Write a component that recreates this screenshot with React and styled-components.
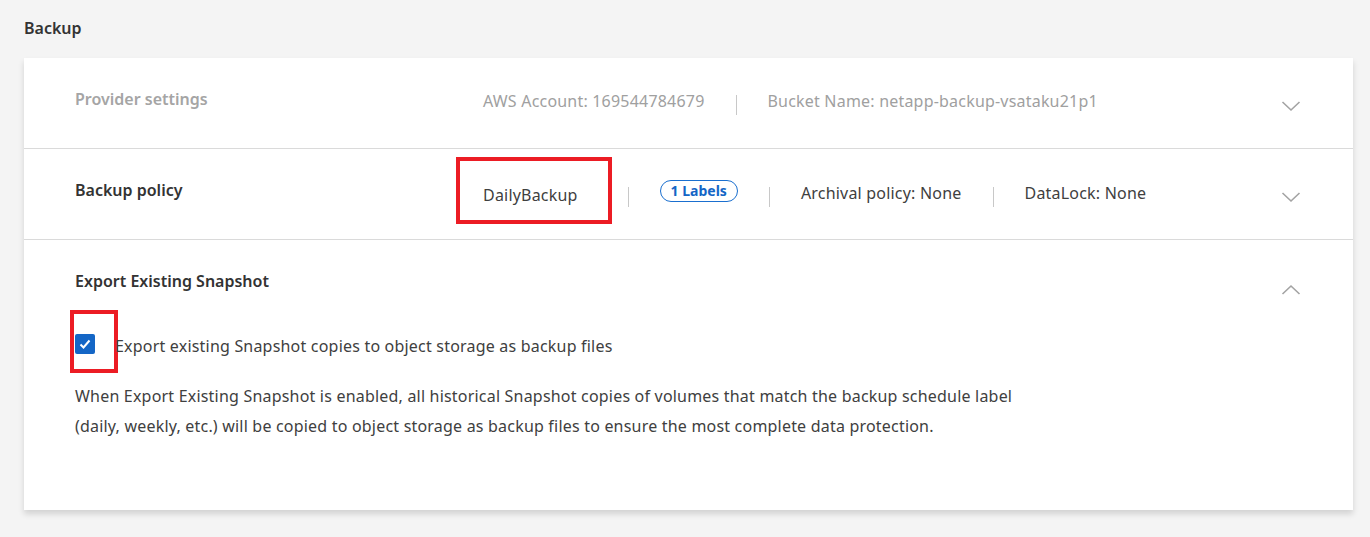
import React from 'react'
import styled, { createGlobalStyle } from 'styled-components'

const Global = createGlobalStyle`
  body {
    margin: 0;
    background: #f4f4f4;
    font-family: "Noto Sans", "Open Sans", sans-serif;
    color: #404040;
    letter-spacing: 0.2px;
  }
`

const Page = styled.div`
  padding: 17px 17px 27px 24px;
`

const PageTitle = styled.h2`
  margin: 0 0 19px 0;
  font-size: 16px;
  line-height: 22px;
  font-weight: 600;
  color: #333;
  letter-spacing: 0;
`

const Card = styled.div`
  background: #fff;
  box-shadow: 0 4px 6px rgba(0, 0, 0, 0.14);
`

const Section = styled.div`
  border-bottom: ${props => props.last ? 'none' : '1px solid #dadada'};
  padding: 30px 52px ${props => props.last ? '69px' : '0'} 51px;
  min-height: ${props => props.last ? 'auto' : '60px'};
`

const Header = styled.div`
  display: flex;
  align-items: flex-start;
`

const Label = styled.div`
  width: 408px;
  flex-shrink: 0;
  font-size: 16px;
  line-height: 22px;
  font-weight: 600;
  letter-spacing: 0;
  color: ${props => props.disabled ? '#a5a5a5' : '#333'};
`

const Summary = styled.div`
  flex: 1;
  display: flex;
  align-items: flex-start;
  gap: 31px;
  padding-top: ${props => props.offset || 2}px;
  font-size: 16px;
  line-height: 22px;
  color: ${props => props.disabled ? '#a0a0a0' : '#404040'};
`

const Sep = styled.span`
  width: 1px;
  height: 20px;
  margin-top: 5px;
  background: #c8c8c8;
`

const Highlight = styled.span`
  display: inline-flex;
  align-items: center;
  border: 4px solid #ec1c24;
  margin: -25px -15px -18px -27px;
  padding: 23px 30px 14px 23px;
`

const Badge = styled.span`
  display: inline-flex;
  align-items: center;
  height: 22px;
  padding: 0 10px;
  margin-top: -2px;
  border: 1.5px solid #1a6fcf;
  border-radius: 12px;
  color: #1466c6;
  font-size: 14px;
  font-weight: 700;
  letter-spacing: 0;
  box-sizing: border-box;
`

const Chevron = styled.svg`
  flex-shrink: 0;
  margin-top: ${props => props.up ? '10px' : '8px'};
  width: 20px;
  height: 20px;
`

const CheckRow = styled.div`
  display: flex;
  align-items: flex-start;
  margin-top: 32px;
  font-size: 16px;
  line-height: 22px;
  color: #404040;
`

const CheckFrame = styled.span`
  display: inline-flex;
  flex-shrink: 0;
  border: 4px solid #ec1c24;
  margin: -22px -3px -19px -5px;
  padding: 20px 19px 15px 1px;
`

const Box = styled.span`
  width: 20px;
  height: 20px;
  flex-shrink: 0;
  border-radius: 2px;
  background: #1466c6;
  display: flex;
  align-items: center;
  justify-content: center;
`

const CheckText = styled.span`
  padding-top: 3px;
`

const Note = styled.p`
  margin: 24px 0 0 0;
  max-width: 960px;
  font-size: 16px;
  line-height: 30px;
  color: #404040;
`

const Arrow = ({ up }) => (
  <Chevron up={up} viewBox="0 0 20 20">
    <polyline
      points={up ? '1.5,14 10,6 18.5,14' : '1.5,6 10,14 18.5,6'}
      fill="none"
      stroke="#a3a3a3"
      strokeWidth="1.6"
    />
  </Chevron>
)

export default function App() {
  return (
    <Page>
      <Global />
      <PageTitle>Backup</PageTitle>
      <Card>
        <Section>
          <Header>
            <Label disabled>Provider settings</Label>
            <Summary disabled>
              <span>AWS Account: 169544784679</span>
              <Sep />
              <span>Bucket Name: netapp-backup-vsataku21p1</span>
            </Summary>
            <Arrow />
          </Header>
        </Section>

        <Section>
          <Header>
            <Label>Backup policy</Label>
            <Summary offset={3}>
              <Highlight>DailyBackup</Highlight>
              <Sep />
              <Badge>1 Labels</Badge>
              <Sep />
              <span>Archival policy: None</span>
              <Sep />
              <span>DataLock: None</span>
            </Summary>
            <Arrow />
          </Header>
        </Section>

        <Section last>
          <Header>
            <Label>Export Existing Snapshot</Label>
            <Summary />
            <Arrow up />
          </Header>
          <CheckRow>
            <CheckFrame>
              <Box>
                <svg width="14" height="14" viewBox="0 0 14 14">
                  <polyline points="2.5,7.5 5.5,10.5 11.5,3.5" fill="none" stroke="#fff" strokeWidth="2" />
                </svg>
              </Box>
            </CheckFrame>
            <CheckText>Export existing Snapshot copies to object storage as backup files</CheckText>
          </CheckRow>
          <Note>
            When Export Existing Snapshot is enabled, all historical Snapshot copies of volumes that match the backup schedule label (daily, weekly, etc.) will be copied to object storage as backup files to ensure the most complete data protection.
          </Note>
        </Section>
      </Card>
    </Page>
  )
}
